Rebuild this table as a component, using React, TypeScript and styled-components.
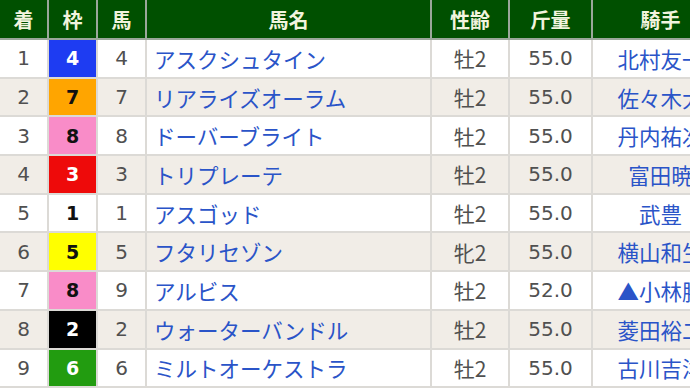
import React from "react";
import styled, { createGlobalStyle } from "styled-components";

const GlobalStyle = createGlobalStyle`
    html, body {
        margin: 0;
        padding: 0;
        overflow: hidden;
        background: #fff;
    }
    body {
        font-family: "DejaVu Sans", "Noto Sans CJK JP", sans-serif;
    }
`;

const colors = {
    head: "#005000",
    headText: "#f2f4de",
    line: "#dcdad6",
    even: "#f1ede7",
    text: "#505050",
    link: "#2a54c8",
};

const frames: Record<number, { bg: string; fg: string }> = {
    1: { bg: "#ffffff", fg: "#111" },
    2: { bg: "#000000", fg: "#fff" },
    3: { bg: "#ee0a0a", fg: "#fff" },
    4: { bg: "#1e3cf2", fg: "#fff" },
    5: { bg: "#ffff00", fg: "#111" },
    6: { bg: "#229c10", fg: "#fff" },
    7: { bg: "#ffa500", fg: "#111" },
    8: { bg: "#f98cc8", fg: "#111" },
};

const Table = styled.table`
    width: 729px;
    table-layout: fixed;
    border-collapse: collapse;
`;

const HeadCell = styled.th`
    height: 38px;
    padding: 0;
    background-color: ${colors.head};
    color: ${colors.headText};
    font-family: "Noto Sans CJK JP", sans-serif;
    font-size: 20px;
    font-weight: 700;
    text-align: center;
    border: 2px solid #9aa79a;
    border-top: none;
    &:first-child {
        border-left: none;
    }
`;

const Row = styled.tr<{ $even: boolean }>`
    background-color: ${(p) => (p.$even ? colors.even : "#fff")};
`;

const Cell = styled.td`
    height: 36.7px;
    padding: 0;
    border: 2px solid ${colors.line};
    color: ${colors.text};
    font-size: 20px;
    text-align: center;
    &:first-child {
        border-left: none;
    }
`;

const FrameCell = styled(Cell)<{ $bg: string; $fg: string }>`
    background-color: ${(p) => p.$bg};
    color: ${(p) => p.$fg};
    font-weight: 700;
    font-size: 19px;
`;

const NameCell = styled(Cell)`
    text-align: left;
    padding-left: 7px;
    color: ${colors.link};
    font-family: "Noto Sans CJK JP", sans-serif;
    font-size: 21.5px;
    white-space: nowrap;
`;

const SexCell = styled(Cell)`
    font-family: "Noto Sans CJK JP", sans-serif;
    font-size: 21px;
`;

const JockeyName = styled.div`
    width: 86px;
    margin: 0 auto;
    text-align: center;
    white-space: nowrap;
    color: ${colors.link};
    font-family: "Noto Sans CJK JP", sans-serif;
    font-size: 21.5px;
`;

interface Runner {
    rank: number;
    frame: number;
    num: number;
    name: string;
    sex: string;
    weight: string;
    jockey: string;
}

const runners: Runner[] = [
    { rank: 1, frame: 4, num: 4, name: "アスクシュタイン", sex: "牡2", weight: "55.0", jockey: "北村友一" },
    { rank: 2, frame: 7, num: 7, name: "リアライズオーラム", sex: "牡2", weight: "55.0", jockey: "佐々木大輔" },
    { rank: 3, frame: 8, num: 8, name: "ドーバーブライト", sex: "牡2", weight: "55.0", jockey: "丹内祐次" },
    { rank: 4, frame: 3, num: 3, name: "トリプレーテ", sex: "牡2", weight: "55.0", jockey: "富田暁" },
    { rank: 5, frame: 1, num: 1, name: "アスゴッド", sex: "牡2", weight: "55.0", jockey: "武豊" },
    { rank: 6, frame: 5, num: 5, name: "フタリセゾン", sex: "牝2", weight: "55.0", jockey: "横山和生" },
    { rank: 7, frame: 8, num: 9, name: "アルビス", sex: "牡2", weight: "52.0", jockey: "▲小林勝太" },
    { rank: 8, frame: 2, num: 2, name: "ウォーターバンドル", sex: "牡2", weight: "55.0", jockey: "菱田裕二" },
    { rank: 9, frame: 6, num: 6, name: "ミルトオーケストラ", sex: "牡2", weight: "55.0", jockey: "古川吉洋" },
];

const widths = [48, 49, 49, 285, 78, 83, 137];
const heads = ["着", "枠", "馬", "馬名", "性齢", "斤量", "騎手"];

const App = () => {
    return (
        <>
            <GlobalStyle />
            <Table>
                <colgroup>
                    {widths.map((w, i) => (
                        <col key={i} style={{ width: w }} />
                    ))}
                </colgroup>
                <thead>
                    <tr>
                        {heads.map((h) => (
                            <HeadCell key={h}>{h}</HeadCell>
                        ))}
                    </tr>
                </thead>
                <tbody>
                    {runners.map((r, i) => {
                        const f = frames[r.frame];
                        return (
                            <Row key={r.rank} $even={i % 2 === 1}>
                                <Cell>{r.rank}</Cell>
                                <FrameCell $bg={f.bg} $fg={f.fg}>
                                    {r.frame}
                                </FrameCell>
                                <Cell>{r.num}</Cell>
                                <NameCell>{r.name}</NameCell>
                                <SexCell>{r.sex}</SexCell>
                                <Cell>{r.weight}</Cell>
                                <Cell>
                                    <JockeyName>{r.jockey}</JockeyName>
                                </Cell>
                            </Row>
                        );
                    })}
                </tbody>
            </Table>
        </>
    );
};

export default App;
